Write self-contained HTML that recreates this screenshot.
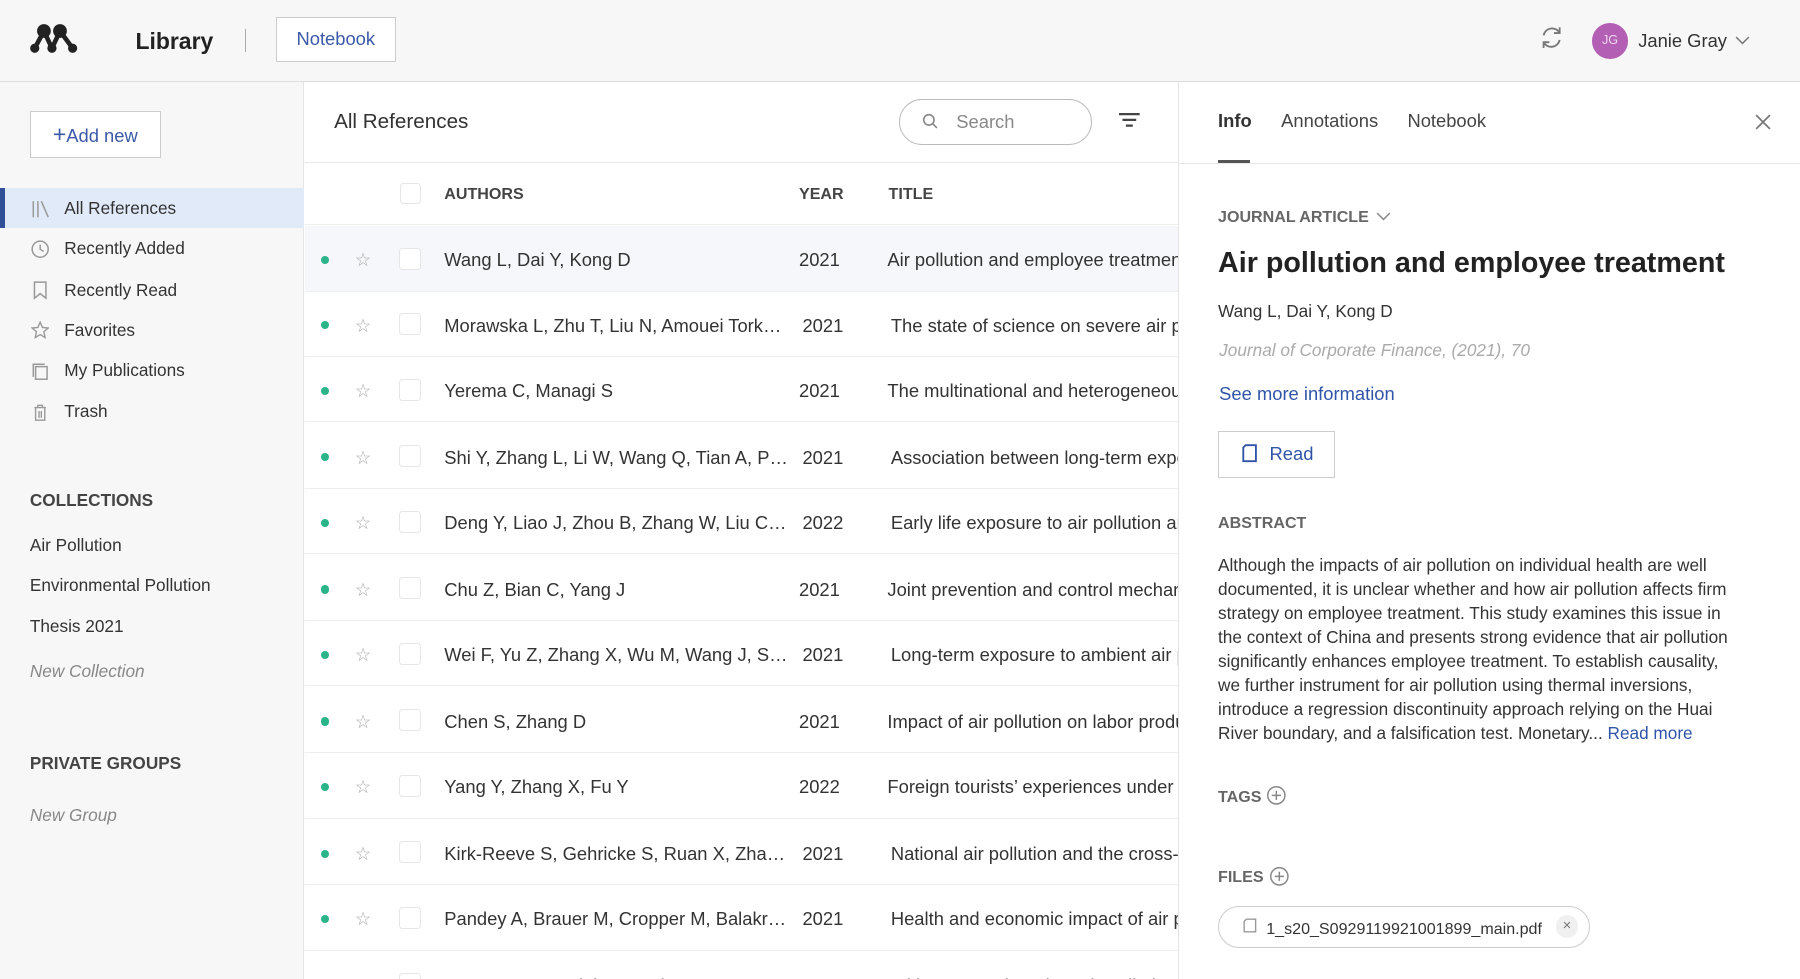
<!DOCTYPE html>
<html><head><meta charset="utf-8"><style>
*{box-sizing:border-box;margin:0;padding:0}
html,body{width:1800px;height:979px;overflow:hidden;background:#fff}
#w{zoom:1.148;width:1568px;height:853px;position:relative;font-family:"Liberation Sans",sans-serif;color:#333;overflow:hidden}
.a{position:absolute;white-space:nowrap}
.hdr{left:0;top:0;width:1568px;height:71px;background:#f7f7f7;border-bottom:1px solid #ddd}
.side{left:0;top:71px;width:265px;height:782px;background:#f7f7f7;border-right:1px solid #e4e4e4}
.nav{left:0;width:265px;height:35px;font-size:15px;color:#333;line-height:35px;padding-left:56px}
.nav svg{position:absolute;left:27px;top:10px}
.sh{font-size:15px;font-weight:bold;color:#444;left:26px}
.col{font-size:15px;color:#333;left:26px}
.row{left:266px;width:760px;height:57px;border-bottom:1px solid #eee;font-size:16px;color:#333}
.row span{position:absolute;top:20px}
.dot{left:14px;top:26px!important;width:7px;height:7px;border-radius:50%;background:#2bb38a}
.cb{left:82px;top:19px!important;width:19px;height:19px;border:1px solid #e6e6e6;border-radius:3px;background:#fff}
.rp{left:1026px;top:71px;width:542px;height:782px;background:#fff;border-left:1px solid #e4e4e4}
.lbl{font-size:14px;font-weight:bold;color:#666}
</style></head><body><div id="w">
<div class="a hdr"></div>
<svg class="a" style="left:25px;top:20px" width="44" height="28" viewBox="0 0 44 28"><g fill="#222"><circle cx="13" cy="7" r="6"/><circle cx="27" cy="7" r="6"/><circle cx="5" cy="22" r="4"/><circle cx="20" cy="22" r="4"/><circle cx="38" cy="22" r="4"/></g><g stroke="#222" stroke-width="4"><path d="M13 7L5 22M13 7L20 22M27 7L20 22M27 7L38 22"/></g></svg>
<div class="a" style="left:118px;top:24px;font-size:20px;font-weight:bold;color:#222">Library</div>
<div class="a" style="left:213px;top:25px;width:1px;height:20px;background:#aaa"></div>
<div class="a" style="left:240px;top:15px;width:105px;height:39px;border:1px solid #ccc;background:#fff;font-size:16px;color:#3a59a8;text-align:center;line-height:37px">Notebook</div>
<svg class="a" style="left:1341px;top:22px" width="22" height="22" viewBox="0 0 22 22" fill="none" stroke="#777" stroke-width="1.6"><path d="M4 9a7.5 7.5 0 0 1 14-2M18 13a7.5 7.5 0 0 1-14 2"/><path d="M18 2v5h-5M4 20v-5h5"/></svg>
<div class="a" style="left:1387px;top:20px;width:31px;height:31px;border-radius:50%;background:#b25fb4;color:#f1d9f1;font-size:11px;text-align:center;line-height:31px">JG</div>
<div class="a" style="left:1427px;top:26px;font-size:16px;color:#333">Janie Gray</div>
<svg class="a" style="left:1511px;top:31px" width="13" height="8"><path d="M1 1l5.5 5.5L12 1" fill="none" stroke="#777" stroke-width="1.3"/></svg>

<div class="a side"></div>
<div class="a" style="left:26px;top:97px;width:114px;height:41px;border:1px solid #ccc;background:#fff;font-size:16px;color:#3a59a8;line-height:39px;text-align:center"><b style="font-size:20px;font-weight:normal">+</b>Add new</div>
<div class="a" style="left:0;top:164px;width:265px;height:35px;background:#e1eaf8"></div>
<div class="a" style="left:0;top:164px;width:4px;height:35px;background:#2f4f98"></div>
<div class="a nav" style="top:164px"><svg width="16" height="16"><path d="M2 1v14M6 1v14M9 1l6 14" stroke="#999" stroke-width="1.3"/></svg>All References</div>
<div class="a nav" style="top:199px"><svg width="16" height="16"><circle cx="8" cy="8" r="7" fill="none" stroke="#999" stroke-width="1.3"/><path d="M8 4v4l3 2" fill="none" stroke="#999" stroke-width="1.3"/></svg>Recently Added</div>
<div class="a nav" style="top:235px"><svg width="16" height="16"><path d="M3 1h10v14l-5-4-5 4z" fill="none" stroke="#999" stroke-width="1.3"/></svg>Recently Read</div>
<div class="a nav" style="top:270px"><svg width="16" height="16"><path d="M8 1l2 4.6 5 .5-3.8 3.3 1.1 5L8 11.8 3.7 14.4l1.1-5L1 6.1l5-.5z" fill="none" stroke="#999" stroke-width="1.2"/></svg>Favorites</div>
<div class="a nav" style="top:305px"><svg width="16" height="16"><path d="M4 4h10v11H4zM2 13V2h10" fill="none" stroke="#999" stroke-width="1.3"/></svg>My Publications</div>
<div class="a nav" style="top:341px"><svg width="16" height="16"><path d="M3 4h10M6 4V2h4v2M4 4v11h8V4M7 7v6M9 7v6" fill="none" stroke="#999" stroke-width="1.2"/></svg>Trash</div>
<div class="a sh" style="top:427px">COLLECTIONS</div>
<div class="a col" style="top:466px">Air Pollution</div>
<div class="a col" style="top:501px">Environmental Pollution</div>
<div class="a col" style="top:537px">Thesis 2021</div>
<div class="a col" style="top:576px;color:#888;font-style:italic">New Collection</div>
<div class="a sh" style="top:656px">PRIVATE GROUPS</div>
<div class="a col" style="top:701px;color:#888;font-style:italic">New Group</div>

<div class="a" style="left:266px;top:71px;width:760px;height:71px;border-bottom:1px solid #e8e8e8"></div>
<div class="a" style="left:291px;top:96px;font-size:18px;color:#333">All References</div>
<div class="a" style="left:783px;top:86px;width:168px;height:40px;border:1px solid #bbb;border-radius:20px"></div>
<svg class="a" style="left:803px;top:98px" width="15" height="15"><circle cx="6" cy="6" r="4.5" fill="none" stroke="#888" stroke-width="1.4"/><path d="M9.5 9.5L13 13" stroke="#888" stroke-width="1.4"/></svg>
<div class="a" style="left:833px;top:97px;font-size:16px;color:#888">Search</div>
<svg class="a" style="left:975px;top:98px" width="18" height="14"><path d="M0 1h18M3 6h12M6 11h6" stroke="#444" stroke-width="2"/></svg>
<div class="a" style="left:266px;top:142px;width:760px;height:54px;border-bottom:1px solid #eee"></div>
<div class="a" style="left:348px;top:159px;width:19px;height:19px;border:1px solid #e6e6e6;border-radius:3px"></div>
<div class="a" style="left:387px;top:161px;font-size:14px;font-weight:bold;color:#444">AUTHORS</div>
<div class="a" style="left:696px;top:161px;font-size:14px;font-weight:bold;color:#444">YEAR</div>
<div class="a" style="left:774px;top:161px;font-size:14px;font-weight:bold;color:#444">TITLE</div>

<div class="a row" style="top:197px;background:#f5f7fa"><i class="a dot"></i><span style="left:43px;color:#aaa">☆</span><i class="a cb"></i><span style="left:121px">Wang L, Dai Y, Kong D</span><span style="left:430px">2021</span><span style="left:507px">Air pollution and employee treatment</span></div>
<div class="a row" style="top:254px"><i class="a dot"></i><span style="left:43px;color:#aaa">☆</span><i class="a cb"></i><span style="left:121px">Morawska L, Zhu T, Liu N, Amouei Tork…</span><span style="left:433px">2021</span><span style="left:510px">The state of science on severe air pollution</span></div>
<div class="a row" style="top:311px"><i class="a dot"></i><span style="left:43px;color:#aaa">☆</span><i class="a cb"></i><span style="left:121px">Yerema C, Managi S</span><span style="left:430px">2021</span><span style="left:507px">The multinational and heterogeneous</span></div>
<div class="a row" style="top:369px"><i class="a dot"></i><span style="left:43px;color:#aaa">☆</span><i class="a cb"></i><span style="left:121px">Shi Y, Zhang L, Li W, Wang Q, Tian A, P…</span><span style="left:433px">2021</span><span style="left:510px">Association between long-term exposure</span></div>
<div class="a row" style="top:426px"><i class="a dot"></i><span style="left:43px;color:#aaa">☆</span><i class="a cb"></i><span style="left:121px">Deng Y, Liao J, Zhou B, Zhang W, Liu C…</span><span style="left:433px">2022</span><span style="left:510px">Early life exposure to air pollution and</span></div>
<div class="a row" style="top:484px"><i class="a dot"></i><span style="left:43px;color:#aaa">☆</span><i class="a cb"></i><span style="left:121px">Chu Z, Bian C, Yang J</span><span style="left:430px">2021</span><span style="left:507px">Joint prevention and control mechanism</span></div>
<div class="a row" style="top:541px"><i class="a dot"></i><span style="left:43px;color:#aaa">☆</span><i class="a cb"></i><span style="left:121px">Wei F, Yu Z, Zhang X, Wu M, Wang J, S…</span><span style="left:433px">2021</span><span style="left:510px">Long-term exposure to ambient air pollution</span></div>
<div class="a row" style="top:599px"><i class="a dot"></i><span style="left:43px;color:#aaa">☆</span><i class="a cb"></i><span style="left:121px">Chen S, Zhang D</span><span style="left:430px">2021</span><span style="left:507px">Impact of air pollution on labor productivity</span></div>
<div class="a row" style="top:656px"><i class="a dot"></i><span style="left:43px;color:#aaa">☆</span><i class="a cb"></i><span style="left:121px">Yang Y, Zhang X, Fu Y</span><span style="left:430px">2022</span><span style="left:507px">Foreign tourists’ experiences under air</span></div>
<div class="a row" style="top:714px"><i class="a dot"></i><span style="left:43px;color:#aaa">☆</span><i class="a cb"></i><span style="left:121px">Kirk-Reeve S, Gehricke S, Ruan X, Zha…</span><span style="left:433px">2021</span><span style="left:510px">National air pollution and the cross-sectional</span></div>
<div class="a row" style="top:771px"><i class="a dot"></i><span style="left:43px;color:#aaa">☆</span><i class="a cb"></i><span style="left:121px">Pandey A, Brauer M, Cropper M, Balakr…</span><span style="left:433px">2021</span><span style="left:510px">Health and economic impact of air pollution</span></div>
<div class="a row" style="top:829px"><i class="a dot"></i><span style="left:43px;color:#aaa">☆</span><i class="a cb"></i><span style="left:121px">Brauer M, Casadei B, Harrington R, K…</span><span style="left:430px">2021</span><span style="left:507px">Taking a Stand Against Air Pollution</span></div>

<div class="a rp"></div>
<div class="a" style="left:1026px;top:142px;width:542px;height:1px;background:#e8e8e8"></div>
<div class="a" style="left:1061px;top:96px;font-size:16px;font-weight:bold;color:#333">Info</div>
<div class="a" style="left:1061px;top:139px;width:28px;height:3px;background:#555"></div>
<div class="a" style="left:1116px;top:96px;font-size:16px;color:#444">Annotations</div>
<div class="a" style="left:1226px;top:96px;font-size:16px;color:#444">Notebook</div>
<svg class="a" style="left:1529px;top:99px" width="14" height="14"><path d="M1 1l12 12M13 1L1 13" stroke="#777" stroke-width="1.5"/></svg>
<div class="a lbl" style="left:1061px;top:181px">JOURNAL ARTICLE</div>
<svg class="a" style="left:1199px;top:185px" width="13" height="8"><path d="M1 1l5.5 5.5L12 1" fill="none" stroke="#888" stroke-width="1.3"/></svg>
<div class="a" style="left:1061px;top:215px;font-size:25px;font-weight:bold;color:#222">Air pollution and employee treatment</div>
<div class="a" style="left:1061px;top:262px;font-size:15px;color:#333">Wang L, Dai Y, Kong D</div>
<div class="a" style="left:1062px;top:296px;font-size:15px;color:#aaa;font-style:italic">Journal of Corporate Finance, (2021), 70</div>
<div class="a" style="left:1062px;top:334px;font-size:16px;color:#2f54a8">See more information</div>
<div class="a" style="left:1061px;top:375px;width:102px;height:41px;border:1px solid #ccc;font-size:16px;color:#2f54a8;line-height:39px;padding-left:44px">Read</div>
<svg class="a" style="left:1081px;top:387px" width="15" height="16"><path d="M4 1h9v14H2V3z" fill="none" stroke="#2f54a8" stroke-width="1.6"/></svg>
<div class="a lbl" style="left:1061px;top:448px">ABSTRACT</div>
<div class="a" style="left:1061px;top:483px;font-size:15px;line-height:20.8px;color:#333">Although the impacts of air pollution on individual health are well<br>documented, it is unclear whether and how air pollution affects firm<br>strategy on employee treatment. This study examines this issue in<br>the context of China and presents strong evidence that air pollution<br>significantly enhances employee treatment. To establish causality,<br>we further instrument for air pollution using thermal inversions,<br>introduce a regression discontinuity approach relying on the Huai<br>River boundary, and a falsification test. Monetary... <span style="color:#2f54a8">Read more</span></div>
<div class="a lbl" style="left:1061px;top:686px">TAGS</div>
<svg class="a" style="left:1103px;top:684px" width="18" height="18"><circle cx="9" cy="9" r="7.5" fill="none" stroke="#888" stroke-width="1.3"/><path d="M9 5v8M5 9h8" stroke="#888" stroke-width="1.3"/></svg>
<div class="a lbl" style="left:1061px;top:756px">FILES</div>
<svg class="a" style="left:1105px;top:754px" width="18" height="18"><circle cx="9" cy="9" r="7.5" fill="none" stroke="#888" stroke-width="1.3"/><path d="M9 5v8M5 9h8" stroke="#888" stroke-width="1.3"/></svg>
<div class="a" style="left:1061px;top:789px;width:324px;height:37px;border:1px solid #ccc;border-radius:19px"></div>
<svg class="a" style="left:1083px;top:800px" width="12" height="13"><path d="M3 1h8v11H1V3z" fill="none" stroke="#999" stroke-width="1.2"/></svg>
<div class="a" style="left:1103px;top:801px;font-size:14px;color:#333">1_s20_S0929119921001899_main.pdf</div>
<div class="a" style="left:1355px;top:797px;width:20px;height:20px;border-radius:50%;background:#f0f0f0;color:#777;font-size:13px;text-align:center;line-height:20px">×</div>
</div></body></html>
